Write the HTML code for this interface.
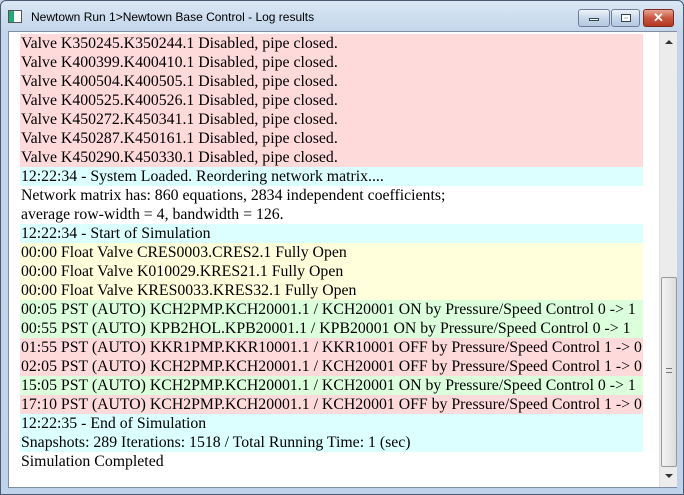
<!DOCTYPE html>
<html><head><style>
*{margin:0;padding:0;box-sizing:border-box}
body{width:684px;height:495px;overflow:hidden;background:#c4d7ea;font-family:"Liberation Sans",sans-serif;position:relative}
.frame{position:absolute;left:0;top:0;width:684px;height:495px;border:1px solid #4a5a70;border-radius:6px 6px 0 0;background:linear-gradient(#dbe7f4,#c3d6eb 30px,#bfd3ea)}
.title{position:absolute;left:31px;top:10px;font-size:12px;color:#000}
.ico{position:absolute;left:8px;top:10px;width:14px;height:13px;border:1px solid #555;background:linear-gradient(90deg,#2a7 0 40%,#fff 40%)}
.btn{position:absolute;top:9px;height:18px;border:1px solid #6d7f98;border-radius:3px;background:linear-gradient(#eef3f9,#c9d8ea 50%,#b4c8e0)}
.content{position:absolute;left:8px;top:31px;width:669px;height:457px;background:#fff;border:1px solid #7f8ea3}
.row{position:absolute;left:11px;width:623px;height:19px;font-family:"Liberation Serif",serif;font-size:15.8px;line-height:19px;padding-left:1px;white-space:nowrap;color:#000;overflow:hidden}
.p{background:#ffdada}.c{background:#dcffff}.y{background:#ffffdc}.g{background:#dcffdc}
.sb{position:absolute;left:650px;top:0;width:18px;height:455px;background:#ececec;border-left:1px solid #e0e0e0}
.thumb{position:absolute;left:1px;top:245px;width:16px;height:190px;border:1px solid #999;border-radius:2px;background:linear-gradient(90deg,#f4f4f4,#dcdcdc)}
</style></head><body>
<div class="frame"></div>
<div class="ico"></div>
<div class="title">Newtown Run 1&gt;Newtown Base Control - Log results</div>
<div class="btn" style="left:578px;width:32px"><div style="position:absolute;left:10px;top:8px;width:10px;height:3px;background:#fff;border:1px solid #345"></div></div>
<div class="btn" style="left:611px;width:29px"><div style="position:absolute;left:9px;top:4px;width:10px;height:8px;border:1px solid #345;box-shadow:inset 0 0 0 2px #fff"></div></div>
<div class="btn" style="left:643px;width:31px;border-color:#7a2a20;background:linear-gradient(#e8a493,#c9553e 50%,#b33a24);color:#fff;font-weight:bold;font-size:13px;text-align:center;line-height:16px">✕</div>
<div class="content">
<div class="row p" style="top:2px">Valve K350245.K350244.1 Disabled, pipe closed.</div>
<div class="row p" style="top:21px">Valve K400399.K400410.1 Disabled, pipe closed.</div>
<div class="row p" style="top:40px">Valve K400504.K400505.1 Disabled, pipe closed.</div>
<div class="row p" style="top:59px">Valve K400525.K400526.1 Disabled, pipe closed.</div>
<div class="row p" style="top:78px">Valve K450272.K450341.1 Disabled, pipe closed.</div>
<div class="row p" style="top:97px">Valve K450287.K450161.1 Disabled, pipe closed.</div>
<div class="row p" style="top:116px">Valve K450290.K450330.1 Disabled, pipe closed.</div>
<div class="row c" style="top:135px">12:22:34 - System Loaded. Reordering network matrix....</div>
<div class="row" style="top:154px">Network matrix has: 860 equations, 2834 independent coefficients;</div>
<div class="row" style="top:173px">average row-width = 4, bandwidth = 126.</div>
<div class="row c" style="top:192px">12:22:34 - Start of Simulation</div>
<div class="row y" style="top:211px">00:00 Float Valve CRES0003.CRES2.1 Fully Open</div>
<div class="row y" style="top:230px">00:00 Float Valve K010029.KRES21.1 Fully Open</div>
<div class="row y" style="top:249px">00:00 Float Valve KRES0033.KRES32.1 Fully Open</div>
<div class="row g" style="top:268px">00:05 PST (AUTO) KCH2PMP.KCH20001.1 / KCH20001 ON by Pressure/Speed Control 0 -&gt; 1</div>
<div class="row g" style="top:287px">00:55 PST (AUTO) KPB2HOL.KPB20001.1 / KPB20001 ON by Pressure/Speed Control 0 -&gt; 1</div>
<div class="row p" style="top:306px">01:55 PST (AUTO) KKR1PMP.KKR10001.1 / KKR10001 OFF by Pressure/Speed Control 1 -&gt; 0</div>
<div class="row p" style="top:325px">02:05 PST (AUTO) KCH2PMP.KCH20001.1 / KCH20001 OFF by Pressure/Speed Control 1 -&gt; 0</div>
<div class="row g" style="top:344px">15:05 PST (AUTO) KCH2PMP.KCH20001.1 / KCH20001 ON by Pressure/Speed Control 0 -&gt; 1</div>
<div class="row p" style="top:363px">17:10 PST (AUTO) KCH2PMP.KCH20001.1 / KCH20001 OFF by Pressure/Speed Control 1 -&gt; 0</div>
<div class="row c" style="top:382px">12:22:35 - End of Simulation</div>
<div class="row c" style="top:401px">Snapshots: 289 Iterations: 1518 / Total Running Time: 1 (sec)</div>
<div class="row" style="top:420px">Simulation Completed</div>
<div class="sb">
<div style="position:absolute;left:5px;top:8px;width:0;height:0;border-left:4px solid transparent;border-right:4px solid transparent;border-bottom:4px solid #333"></div>
<div class="thumb"><div style="position:absolute;left:4px;top:90px;width:6px;height:5px;border-top:1px solid #777;border-bottom:1px solid #777"></div></div>
<div style="position:absolute;left:5px;top:442px;width:0;height:0;border-left:4px solid transparent;border-right:4px solid transparent;border-top:4px solid #333"></div>
</div>
</div>
</body></html>
